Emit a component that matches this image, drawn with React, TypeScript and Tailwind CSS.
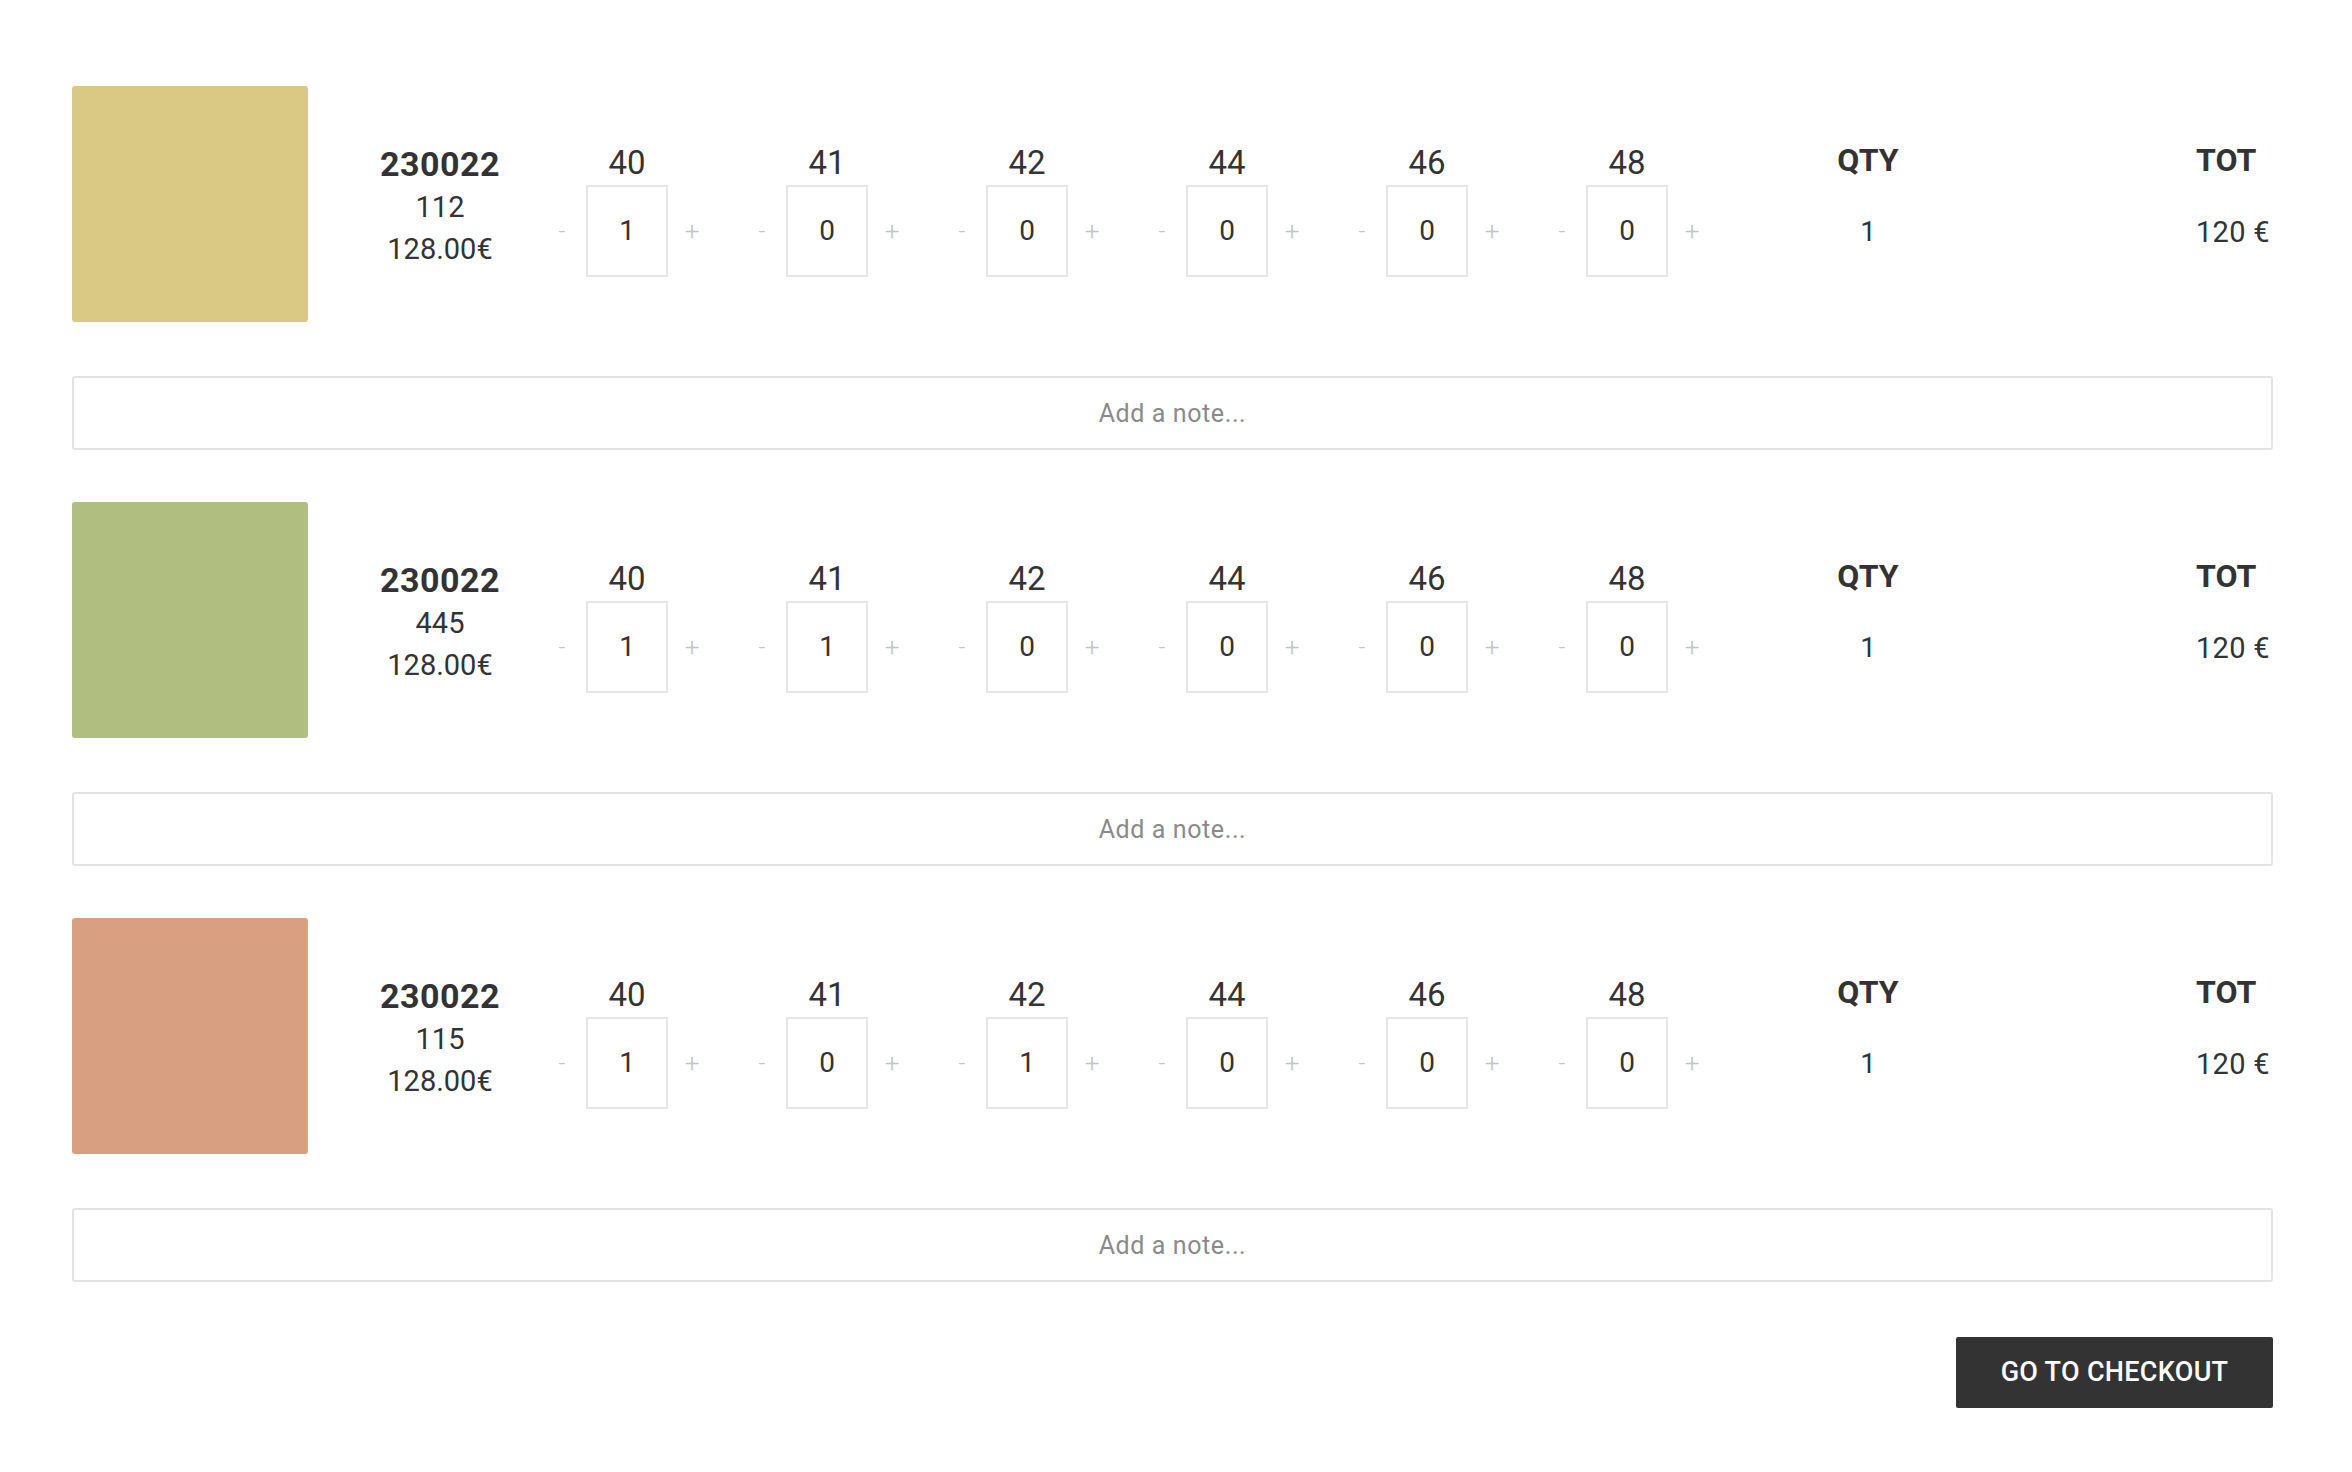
import { useState } from "react";

const SIZES = ["40", "41", "42", "44", "46", "48"];

type Item = {
  code: string;
  variant: string;
  price: string;
  color: string;
  qty: number[];
};

const ITEMS: Item[] = [
  { code: "230022", variant: "112", price: "128.00€", color: "bg-[#dac985]", qty: [1, 0, 0, 0, 0, 0] },
  { code: "230022", variant: "445", price: "128.00€", color: "bg-[#b0bf80]", qty: [1, 1, 0, 0, 0, 0] },
  { code: "230022", variant: "115", price: "128.00€", color: "bg-[#d99f81]", qty: [1, 0, 1, 0, 0, 0] },
];

function SizeStepper({ size, value }: { size: string; value: number }) {
  return (
    <div className="w-[200px] pt-[57px] flex flex-col items-center">
      <div className="h-[40px] leading-[40px] text-[33px] text-[#333]">{size}</div>
      <div className="mt-[2px] flex items-center gap-[12px]">
        <button className="w-[24px] text-center text-[24px] text-[#c4c4c4] font-light">-</button>
        <div className="w-[82px] h-[92px] border-2 border-[#e6e6e6] flex items-center justify-center text-[28px] text-[#333]">
          {value}
        </div>
        <button className="w-[24px] text-center text-[26px] text-[#c4c4c4] font-light">+</button>
      </div>
    </div>
  );
}

function CartRow({ item }: { item: Item }) {
  const [note, setNote] = useState("");
  return (
    <div className="mb-[52px]">
      <div className="flex items-start">
        <div className={`w-[236px] h-[236px] rounded-[3px] ${item.color}`} />
        <div className="ml-[45px] w-[174px] pt-[57px] text-center text-[#333]">
          <div className="leading-[42px] text-[34px] font-bold tracking-[0.5px]">{item.code}</div>
          <div className="leading-[44px] text-[29px]">{item.variant}</div>
          <div className="leading-[40px] text-[29px]">{item.price}</div>
        </div>
        {SIZES.map((s, i) => (
          <SizeStepper key={s} size={s} value={item.qty[i]} />
        ))}
        <div className="ml-[81px] w-[120px] pt-[54px] text-center text-[#333]">
          <div className="h-[40px] leading-[40px] text-[32px] font-bold">QTY</div>
          <div className="mt-[32px] leading-[40px] text-[28px]">1</div>
        </div>
        <div className="ml-auto w-[77px] pt-[54px] text-left text-[#333]">
          <div className="h-[40px] leading-[40px] text-[32px] font-bold">TOT</div>
          <div className="mt-[32px] leading-[40px] text-[29px] tracking-[0.3px] whitespace-nowrap">120 €</div>
        </div>
      </div>
      <input
        value={note}
        onChange={(e) => setNote(e.target.value)}
        placeholder="Add a note..."
        className="mt-[54px] w-full h-[74px] border-2 border-[#e3e3e3] rounded-[3px] text-center text-[25px] tracking-[0.6px] text-[#555] placeholder:text-[#8a8a8a] outline-none"
      />
    </div>
  );
}

export default function App() {
  return (
    <div
      className="min-h-screen bg-white pt-[86px] pl-[72px] pr-[79px]"
      style={{ fontFamily: "Roboto, 'Noto Sans', sans-serif" }}
    >
      {ITEMS.map((item) => (
        <CartRow key={item.variant} item={item} />
      ))}
      <div className="flex justify-end mt-[55px]">
        <button className="w-[317px] h-[71px] bg-[#333] rounded-[2px] text-white text-[27px] font-medium tracking-[0.3px]">
          GO TO CHECKOUT
        </button>
      </div>
    </div>
  );
}
